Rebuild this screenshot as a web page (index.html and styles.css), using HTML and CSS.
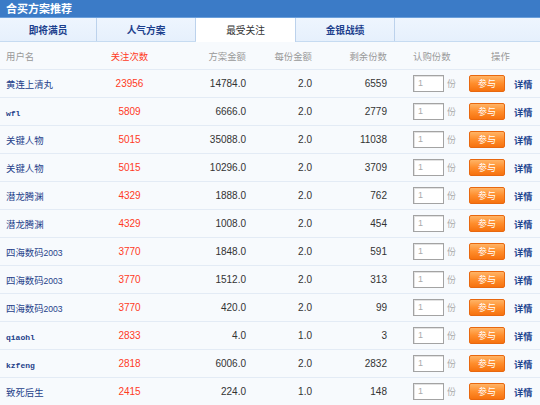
FILE: index.html
```html
<!DOCTYPE html>
<html lang="zh">
<head>
<meta charset="utf-8">
<title>合买方案推荐</title>
<link rel="stylesheet" href="styles.css">
</head>
<body>
<div class="panel">
  <div class="title">合买方案推荐</div>
  <div class="tabs">
    <div class="tab">即将满员</div>
    <div class="tab">人气方案</div>
    <div class="tab active">最受关注</div>
    <div class="tab">金银战绩</div>
    <div class="tab-rest"></div>
  </div>
  <div class="row head">
    <div class="c-user">用户名</div>
    <div class="c-cnt hot">关注次数</div>
    <div class="c-num">方案金额</div>
    <div class="c-num">每份金额</div>
    <div class="c-num">剩余份数</div>
    <div class="c-buy">认购份数</div>
    <div class="c-op">操作</div>
  </div>

  <div class="row"><div class="c-user">黄连上清丸</div><div class="c-cnt">23956</div><div class="c-num">14784.0</div><div class="c-num">2.0</div><div class="c-num">6559</div><div class="c-buy"><span class="qty">1</span><span class="fen">份</span></div><div class="c-btn"><span class="btn">参与</span></div><div class="c-det">详情</div></div>
  <div class="row"><div class="c-user"><span class="lat">wfl</span></div><div class="c-cnt">5809</div><div class="c-num">6666.0</div><div class="c-num">2.0</div><div class="c-num">2779</div><div class="c-buy"><span class="qty">1</span><span class="fen">份</span></div><div class="c-btn"><span class="btn">参与</span></div><div class="c-det">详情</div></div>
  <div class="row"><div class="c-user">关键人物</div><div class="c-cnt">5015</div><div class="c-num">35088.0</div><div class="c-num">2.0</div><div class="c-num">11038</div><div class="c-buy"><span class="qty">1</span><span class="fen">份</span></div><div class="c-btn"><span class="btn">参与</span></div><div class="c-det">详情</div></div>
  <div class="row"><div class="c-user">关键人物</div><div class="c-cnt">5015</div><div class="c-num">10296.0</div><div class="c-num">2.0</div><div class="c-num">3709</div><div class="c-buy"><span class="qty">1</span><span class="fen">份</span></div><div class="c-btn"><span class="btn">参与</span></div><div class="c-det">详情</div></div>
  <div class="row"><div class="c-user">潜龙腾渊</div><div class="c-cnt">4329</div><div class="c-num">1888.0</div><div class="c-num">2.0</div><div class="c-num">762</div><div class="c-buy"><span class="qty">1</span><span class="fen">份</span></div><div class="c-btn"><span class="btn">参与</span></div><div class="c-det">详情</div></div>
  <div class="row"><div class="c-user">潜龙腾渊</div><div class="c-cnt">4329</div><div class="c-num">1008.0</div><div class="c-num">2.0</div><div class="c-num">454</div><div class="c-buy"><span class="qty">1</span><span class="fen">份</span></div><div class="c-btn"><span class="btn">参与</span></div><div class="c-det">详情</div></div>
  <div class="row"><div class="c-user">四海数码<span class="dig">2003</span></div><div class="c-cnt">3770</div><div class="c-num">1848.0</div><div class="c-num">2.0</div><div class="c-num">591</div><div class="c-buy"><span class="qty">1</span><span class="fen">份</span></div><div class="c-btn"><span class="btn">参与</span></div><div class="c-det">详情</div></div>
  <div class="row"><div class="c-user">四海数码<span class="dig">2003</span></div><div class="c-cnt">3770</div><div class="c-num">1512.0</div><div class="c-num">2.0</div><div class="c-num">313</div><div class="c-buy"><span class="qty">1</span><span class="fen">份</span></div><div class="c-btn"><span class="btn">参与</span></div><div class="c-det">详情</div></div>
  <div class="row"><div class="c-user">四海数码<span class="dig">2003</span></div><div class="c-cnt">3770</div><div class="c-num">420.0</div><div class="c-num">2.0</div><div class="c-num">99</div><div class="c-buy"><span class="qty">1</span><span class="fen">份</span></div><div class="c-btn"><span class="btn">参与</span></div><div class="c-det">详情</div></div>
  <div class="row"><div class="c-user"><span class="lat">qiaohl</span></div><div class="c-cnt">2833</div><div class="c-num">4.0</div><div class="c-num">1.0</div><div class="c-num">3</div><div class="c-buy"><span class="qty">1</span><span class="fen">份</span></div><div class="c-btn"><span class="btn">参与</span></div><div class="c-det">详情</div></div>
  <div class="row"><div class="c-user"><span class="lat">kzfeng</span></div><div class="c-cnt">2818</div><div class="c-num">6006.0</div><div class="c-num">2.0</div><div class="c-num">2832</div><div class="c-buy"><span class="qty">1</span><span class="fen">份</span></div><div class="c-btn"><span class="btn">参与</span></div><div class="c-det">详情</div></div>
  <div class="row"><div class="c-user">致死后生</div><div class="c-cnt">2415</div><div class="c-num">224.0</div><div class="c-num">1.0</div><div class="c-num">148</div><div class="c-buy"><span class="qty">1</span><span class="fen">份</span></div><div class="c-btn"><span class="btn">参与</span></div><div class="c-det">详情</div></div>
</div>
</body>
</html>
```

FILE: styles.css
```css
* { box-sizing: border-box; }
html, body {
  margin: 0;
  padding: 0;
  background: #f7fafd;
  font-family: "Liberation Sans", "Noto Sans CJK SC", sans-serif;
}
.panel {
  width: 540px;
  overflow: hidden;
}
.title {
  height: 18px;
  background: #3b7bc7;
  border-bottom: 1px solid #6a9fdb;
  color: #fff;
  font-family: "Noto Sans CJK SC", sans-serif;
  font-weight: bold;
  font-size: 11px;
  line-height: 17px;
  padding-left: 6px;
}
.tabs {
  display: flex;
  height: 24px;
  background: linear-gradient(#eef5fe, #e6f0fc);
  border-bottom: 1px solid #c6dbf1;
}
.tab {
  width: 99px;
  flex: none;
  border-right: 1px solid #bcd2ec;
  text-align: center;
  font-family: "Noto Sans CJK SC", sans-serif;
  font-weight: bold;
  font-size: 9.7px;
  line-height: 25px;
  color: #1c3f8d;
}
.tab:first-child { width: 97px; }
.tab.active {
  width: 100px;
  background: #fff;
  font-weight: normal;
  color: #333;
  margin-bottom: -1px;
  height: 24px;
}
.tab-rest { flex: 1; }
.row {
  display: grid;
  grid-template-columns: 100px 60px 86px 66px 75px 82px 45px 26px;
  align-items: center;
  height: 28px;
  border-bottom: 1px solid #e3ebf5;
  font-size: 10px;
  color: #333;
}
.row.head {
  color: #999;
  font-family: "Noto Sans CJK SC", sans-serif;
  font-size: 9.4px;
}
.c-user {
  padding-left: 6px;
  font-family: "Noto Sans CJK SC", sans-serif;
  font-size: 9.4px;
  color: #1e3f8a;
}
.head .c-user { color: #999; }
.c-user .lat {
  font-family: "Liberation Mono", monospace;
  font-size: 8px;
  font-weight: bold;
}
.c-user .dig {
  font-family: "Liberation Sans", sans-serif;
  font-size: 8.6px;
}
.c-cnt {
  text-align: center;
  color: #ff3b1f;
  padding-right: 1px;
}
.head .c-cnt.hot { color: #ff3b1f; }
.c-num {
  text-align: right;
}
.c-buy {
  padding-left: 26px;
  display: flex;
  align-items: center;
}
.head .c-op {
  grid-column: span 2;
  padding-left: 22px;
}
.qty {
  width: 31px;
  height: 17px;
  background: #fff;
  border: 1px solid #a3a3a3;
  box-shadow: inset 1px 1px 0 #e2e2e2;
  color: #aaa;
  font-size: 9px;
  line-height: 15px;
  padding-left: 4px;
}
.fen {
  margin-left: 3px;
  color: #aaa;
  font-family: "Noto Sans CJK SC", sans-serif;
  font-size: 9px;
}
.c-btn { display: flex; }
.btn {
  width: 36px;
  height: 17px;
  border: 1px solid #e8680f;
  border-radius: 2px;
  background: linear-gradient(#ffb466 0%, #ff8d2c 50%, #f6720f 100%);
  color: #fff;
  text-align: center;
  font-family: "Noto Sans CJK SC", sans-serif;
  font-size: 9px;
  line-height: 15px;
}
.c-det {
  font-family: "Noto Sans CJK SC", sans-serif;
  font-weight: bold;
  font-size: 9.2px;
  color: #1d438f;
}
```
